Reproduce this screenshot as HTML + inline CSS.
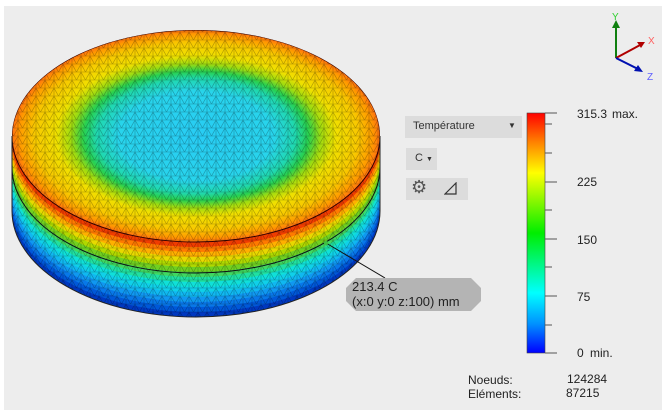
<!DOCTYPE html>
<html><head><meta charset="utf-8"><style>
body{margin:0;width:666px;height:416px;background:#fff;position:relative;overflow:hidden;font-family:"Liberation Sans",sans-serif;}
#bg{position:absolute;left:4px;top:6px;width:658px;height:404px;background:#ededed;}
.t{position:absolute;font-size:12px;color:#222;white-space:nowrap;}
.box{position:absolute;background:#dcdcdc;}
</style></head><body>
<div id="bg"></div>
<svg style="position:absolute;left:0;top:0" width="666" height="416">
<defs>
<radialGradient id="top" cx="0.5" cy="0.5" r="0.5">
<stop offset="0" stop-color="#28ccf4"/>
<stop offset="0.42" stop-color="#28d4ec"/>
<stop offset="0.54" stop-color="#20d8b0"/>
<stop offset="0.61" stop-color="#28d050"/>
<stop offset="0.68" stop-color="#a0dc10"/>
<stop offset="0.76" stop-color="#f0e000"/>
<stop offset="0.88" stop-color="#f8c800"/>
<stop offset="0.96" stop-color="#ff9a00"/>
<stop offset="1" stop-color="#ff7010"/>
</radialGradient>
<pattern id="mesh" width="9" height="8" patternUnits="userSpaceOnUse">
<path d="M0 0H9M0 8H9M0 0L4.5 8L9 0M0 8V0M9 0V8" stroke="#000" stroke-opacity="0.3" stroke-width="0.6" fill="none"/>
</pattern>
<clipPath id="cyl"><path d="M12 136 A184 106 0 0 1 380 136 V211 A184 106 0 0 1 12 211 Z"/></clipPath>
<linearGradient id="cb" x1="0" y1="0" x2="0" y2="1">
<stop offset="0" stop-color="#ff0000"/><stop offset="0.12" stop-color="#ff8000"/>
<stop offset="0.25" stop-color="#ffff00"/><stop offset="0.5" stop-color="#00ee00"/>
<stop offset="0.75" stop-color="#00ffff"/><stop offset="0.88" stop-color="#0090ff"/>
<stop offset="1" stop-color="#0000ff"/></linearGradient>
</defs>
<g clip-path="url(#cyl)">
<ellipse cx="196" cy="211" rx="184" ry="106" fill="#0038c0"/>
<ellipse cx="196" cy="206" rx="184" ry="106" fill="#0058d8"/>
<ellipse cx="196" cy="201" rx="184" ry="106" fill="#0878e8"/>
<ellipse cx="196" cy="196" rx="184" ry="106" fill="#1098f0"/>
<ellipse cx="196" cy="191" rx="184" ry="106" fill="#10b8f0"/>
<ellipse cx="196" cy="186" rx="184" ry="106" fill="#10d0e8"/>
<ellipse cx="196" cy="181" rx="184" ry="106" fill="#10e0d8"/>
<ellipse cx="196" cy="176" rx="184" ry="106" fill="#20e0a0"/>
<ellipse cx="196" cy="171" rx="184" ry="106" fill="#40d860"/>
<ellipse cx="196" cy="166" rx="184" ry="106" fill="#70d020"/>
<ellipse cx="196" cy="161" rx="184" ry="106" fill="#b0d800"/>
<ellipse cx="196" cy="156" rx="184" ry="106" fill="#e8d800"/>
<ellipse cx="196" cy="151" rx="184" ry="106" fill="#ffb000"/>
<ellipse cx="196" cy="146" rx="184" ry="106" fill="#ff7a00"/>
<ellipse cx="196" cy="141" rx="184" ry="106" fill="#f03c00"/>
<ellipse cx="196" cy="136" rx="184" ry="106" fill="url(#top)" stroke="#300" stroke-width="1"/>
<path d="M12 167 A184 106 0 0 0 380 167" fill="none" stroke="#111" stroke-width="1"/>
<rect x="0" y="0" width="400" height="330" fill="url(#mesh)"/>
</g>
<path d="M12 136 V211 A184 106 0 0 0 380 211 V136" fill="none" stroke="#222" stroke-width="1"/>
<line x1="326" y1="243" x2="385" y2="278" stroke="#111" stroke-width="1"/>
<circle cx="326" cy="243" r="2" fill="#40c040"/>
<path d="M356 278 H471 L481 288 V301 L471 311 H356 L346 301 V288 Z" fill="#b4b4b4"/>
<rect x="527" y="113" width="18" height="240" fill="url(#cb)" stroke="#444" stroke-width="0.6"/>
<g stroke="#555" stroke-width="1">
<line x1="545" y1="113" x2="557" y2="113"/><line x1="545" y1="124" x2="552" y2="124"/>
<line x1="545" y1="153" x2="552" y2="153"/><line x1="545" y1="182" x2="557" y2="182"/>
<line x1="545" y1="210" x2="552" y2="210"/><line x1="545" y1="239" x2="557" y2="239"/>
<line x1="545" y1="267" x2="552" y2="267"/><line x1="545" y1="296" x2="557" y2="296"/>
<line x1="545" y1="325" x2="552" y2="325"/><line x1="545" y1="353" x2="557" y2="353"/>
</g>
<g stroke-width="2">
<line x1="616" y1="58" x2="616" y2="24" stroke="#108010"/>
<path d="M612 28 L616 20 L620 28Z" fill="#108010"/>
<line x1="616" y1="58" x2="642" y2="44" stroke="#b00000"/>
<path d="M637 42 L645 42 L641 48Z" fill="#b00000"/>
<line x1="616" y1="58" x2="640" y2="70" stroke="#0010b0"/>
<path d="M634 71 L643 72 L638 65Z" fill="#0010b0"/>
</g>
<text x="612" y="20" font-size="10" fill="#30d030" font-family="Liberation Sans">Y</text>
<text x="648" y="44" font-size="10" fill="#ff6060" font-family="Liberation Sans">X</text>
<text x="647" y="80" font-size="10" fill="#6060ff" font-family="Liberation Sans">Z</text>
</svg>
<div class="t" style="left:352px;top:279px;font-size:13px">213.4 C</div>
<div class="t" style="left:352px;top:294px;font-size:13px">(x:0 y:0 z:100) mm</div>
<div class="box" style="left:405px;top:116px;width:117px;height:22px"></div>
<div class="t" style="left:413px;top:120px;font-size:11px;color:#333">Température</div>
<div class="t" style="left:508px;top:121px;font-size:8px;color:#333">▼</div>
<div class="box" style="left:406px;top:148px;width:31px;height:22px"></div>
<div class="t" style="left:415px;top:152px;font-size:11px;color:#333">C <span style="font-size:7px">▼</span></div>
<div class="box" style="left:406px;top:178px;width:62px;height:22px"></div>
<div class="t" style="left:411px;top:177px;font-size:18px;color:#555">⚙</div>
<svg style="position:absolute;left:444px;top:182px" width="14" height="14"><path d="M1 12 L12 1 V12 Z" fill="none" stroke="#333" stroke-width="1.2"/></svg>
<div class="t" style="left:577px;top:107px">315.3</div>
<div class="t" style="left:612px;top:107px">max.</div>
<div class="t" style="left:577px;top:175px">225</div>
<div class="t" style="left:577px;top:233px">150</div>
<div class="t" style="left:577px;top:290px">75</div>
<div class="t" style="left:577px;top:346px">0</div>
<div class="t" style="left:590px;top:346px">min.</div>
<div class="t" style="left:468px;top:373px">Noeuds:</div>
<div class="t" style="left:468px;top:387px">Eléments:</div>
<div class="t" style="left:567px;top:372px">124284</div>
<div class="t" style="left:566px;top:386px">87215</div>
</body></html>
